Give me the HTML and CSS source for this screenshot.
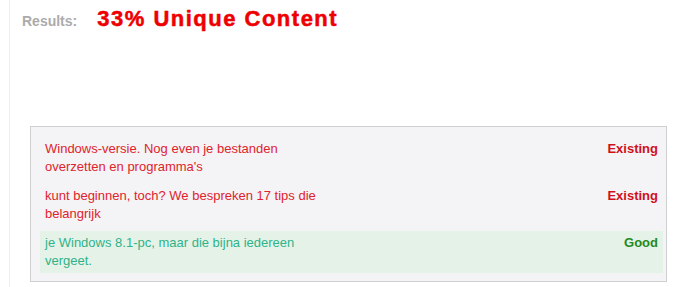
FILE: index.html
```html
<!DOCTYPE html>
<html>
<head>
<meta charset="utf-8">
<link rel="stylesheet" href="styles.css">
</head>
<body>
<div class="panel">
  <div class="header">
    <span class="label">Results:</span>
    <span class="score">33% Unique Content</span>
  </div>
  <div class="results">
    <div class="row existing">
      <div class="text">Windows-versie. Nog even je bestanden overzetten en programma's</div>
      <div class="status">Existing</div>
    </div>
    <div class="row existing">
      <div class="text">kunt beginnen, toch? We bespreken 17 tips die belangrijk</div>
      <div class="status">Existing</div>
    </div>
    <div class="row good">
      <div class="text">je Windows 8.1-pc, maar die bijna iedereen vergeet.</div>
      <div class="status">Good</div>
    </div>
  </div>
</div>
</body>
</html>
```

FILE: styles.css
```css
html, body {
  margin: 0;
  padding: 0;
  background: #ffffff;
  font-family: "Liberation Sans", Arial, sans-serif;
}

.panel {
  margin-left: 9px;
  border-left: 1px solid #eeeef0;
  padding-left: 12px;
  height: 287px;
  box-sizing: border-box;
}

.header {
  display: flex;
  align-items: baseline;
  gap: 20px;
  padding-top: 7px;
  height: 24px;
  line-height: 24px;
}

.label {
  color: #ababab;
  font-weight: bold;
  font-size: 14px;
}

.score {
  color: #ee0000;
  font-weight: bold;
  font-size: 22px;
  letter-spacing: 1.5px;
  -webkit-text-stroke: 0.5px #ee0000;
}

.results {
  margin: 95px 7px 0 8px;
  background: #f4f3f5;
  border: 1px solid #cfcfd2;
  padding: 10px 3px 8px 9px;
}

.row {
  display: flex;
  justify-content: space-between;
  padding: 3px 5px;
  font-size: 13px;
  line-height: 18px;
  margin-bottom: 5px;
}

.row:last-child {
  margin-bottom: 0;
}

.text {
  width: 280px;
}

.status {
  font-weight: bold;
}

.existing .text {
  color: #e0242c;
}

.existing .status {
  color: #d0101c;
}

.good {
  background: #e5f2e7;
}

.good .text {
  color: #2fb28a;
}

.good .status {
  color: #1f8a1c;
}
```
